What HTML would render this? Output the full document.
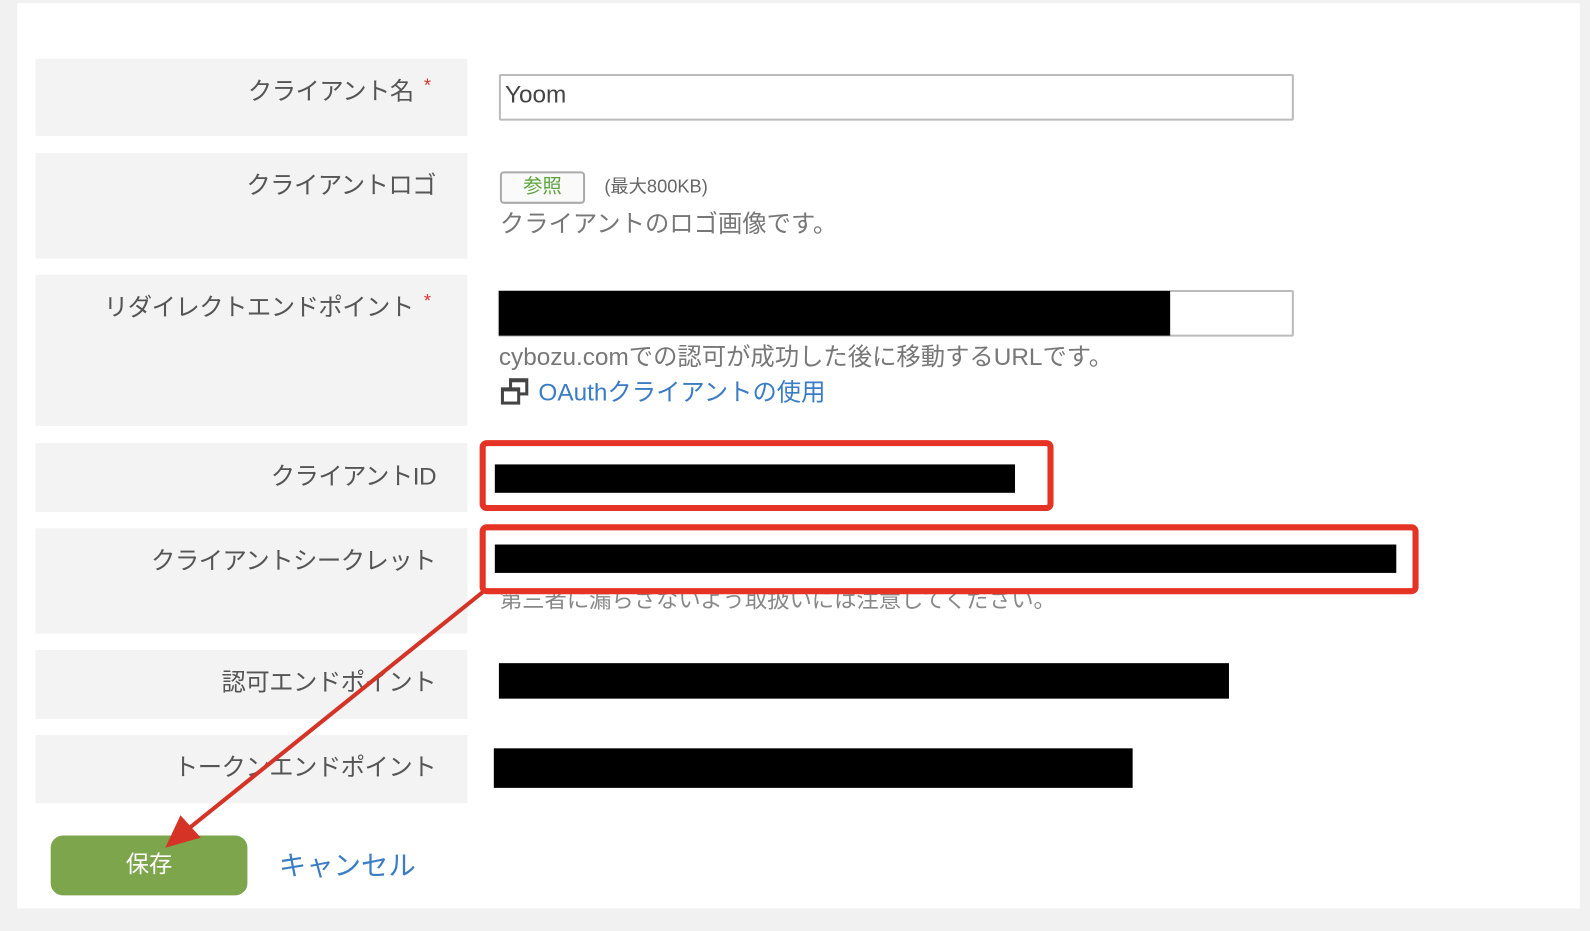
<!DOCTYPE html>
<html><head><meta charset="utf-8">
<style>
*{margin:0;padding:0;box-sizing:border-box}
body{width:1590px;height:918px;background:#f1f1f1;position:relative;overflow:hidden;font-family:"Liberation Sans","Noto Sans CJK JP",sans-serif}
#w{position:absolute;left:0;top:0;width:1568px;height:905px;transform:scale(1.014);transform-origin:0 0}
.panel{position:absolute;left:17px;top:3px;width:1541px;height:893px;background:#fff}
.row{position:absolute;left:35px;width:426px;background:#f3f3f3}
.lbl{position:absolute;font-size:24px;color:#555;white-space:nowrap;letter-spacing:-0.5px}
.star{color:#d33;font-size:18px;position:absolute}
.blk{position:absolute;background:#000}
.t{position:absolute;font-size:23px;color:#777;white-space:nowrap}
</style></head><body>
<div id="w">
<div class="panel"></div>
<div class="row" style="top:58px;height:76px"></div>
<div class="row" style="top:151px;height:104px"></div>
<div class="row" style="top:271px;height:149px"></div>
<div class="row" style="top:437px;height:68px"></div>
<div class="row" style="top:521px;height:104px"></div>
<div class="row" style="top:641px;height:68px"></div>
<div class="row" style="top:725px;height:67px"></div>

<div class="lbl" style="top:70px;right:1160px">クライアント名</div><span class="star" style="left:418px;top:74px">*</span>
<div class="lbl" style="top:163px;right:1138px">クライアントロゴ</div>
<div class="lbl" style="top:283px;right:1160px">リダイレクトエンドポイント</div><span class="star" style="left:418px;top:287px">*</span>
<div class="lbl" style="top:450px;right:1138px">クライアントID</div>
<div class="lbl" style="top:533px;right:1138px">クライアントシークレット</div>
<div class="lbl" style="top:653px;right:1138px">認可エンドポイント</div>
<div class="lbl" style="top:737px;right:1138px">トークンエンドポイント</div>

<div style="position:absolute;left:492px;top:73px;width:784px;height:46px;border:2px solid #bbb;border-radius:2px;font-size:24px;color:#444;padding:5px 4px">Yoom</div>
<div style="position:absolute;left:493px;top:169px;width:84px;height:32px;border:2px solid #aaa;border-radius:4px;background:#fafafa;color:#5aa43a;font-size:19px;text-align:center;line-height:27px">参照</div>
<div class="t" style="left:596px;top:170px;font-size:18px;color:#666">(最大800KB)</div>
<div class="t" style="left:493px;top:201px;font-size:24px">クライアントのロゴ画像です。</div>

<div style="position:absolute;left:491px;top:286px;width:785px;height:46px;border:2px solid #bbb;border-radius:2px"></div>
<div class="blk" style="left:492px;top:287px;width:662px;height:44px"></div>
<div class="t" style="left:492px;top:332px;font-size:24px">cybozu.comでの認可が成功した後に移動するURLです。</div>
<svg style="position:absolute;left:493px;top:371px" width="30" height="30" viewBox="0 0 30 30"><rect x="9" y="2" width="19" height="17" fill="#444"/><rect x="12" y="6" width="13" height="10" fill="#fff"/><rect x="1" y="11" width="19" height="17" fill="#444"/><rect x="4" y="15" width="13" height="10" fill="#fff"/></svg>
<div class="t" style="left:531px;top:367px;color:#3a7cc6;font-size:24px">OAuthクライアントの使用</div>

<div class="blk" style="left:488px;top:458px;width:513px;height:28px"></div>
<div class="blk" style="left:488px;top:537px;width:889px;height:28px"></div>
<div class="t" style="left:493px;top:574px;font-size:22px;color:#888">第三者に漏らさないよう取扱いには注意してください。</div>
<div class="blk" style="left:492px;top:654px;width:720px;height:35px"></div>
<div class="blk" style="left:487px;top:738px;width:630px;height:39px"></div>

<div style="position:absolute;left:50px;top:824px;width:194px;height:59px;background:#7ca54c;border-radius:12px;color:#fff;font-size:23px;text-align:center;line-height:57px">保存</div>
<div class="t" style="left:275px;top:832px;color:#3a7cc6;font-size:27px">キャンセル</div>

<svg style="position:absolute;left:0;top:0" width="1590" height="918">
<rect x="476" y="437" width="560" height="64" rx="4" fill="none" stroke="#e53326" stroke-width="6"/>
<rect x="476" y="520" width="920" height="63" rx="4" fill="none" stroke="#e53326" stroke-width="6"/>
<line x1="476" y1="584" x2="185" y2="818" stroke="#d63327" stroke-width="4"/>
<polygon points="163,836 178,804 198,826" fill="#d63327"/>
</svg>
</div>
</body></html>
